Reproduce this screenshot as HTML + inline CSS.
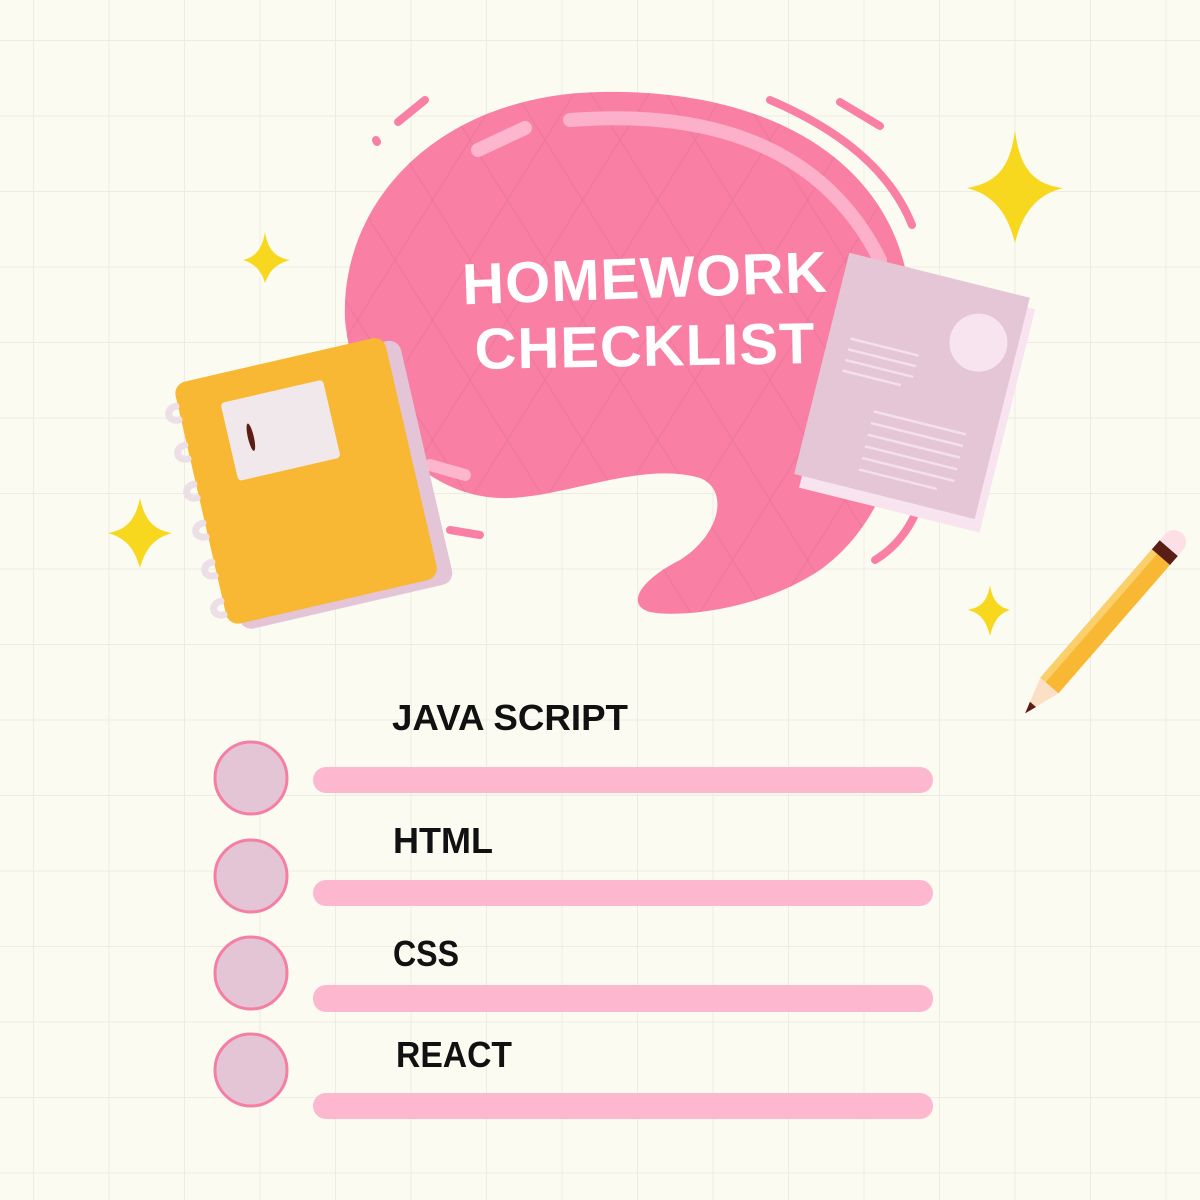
<!DOCTYPE html>
<html><head><meta charset="utf-8"><style>
html,body{margin:0;padding:0}
body{width:1200px;height:1200px;overflow:hidden;background:#fbfbf2;position:relative;font-family:"Liberation Sans",sans-serif}
svg{position:absolute;left:0;top:0}
</style></head><body>
<svg width="1200" height="1200" viewBox="0 0 1200 1200">
<defs>
<pattern id="g" width="75.5" height="75.5" patternUnits="userSpaceOnUse" x="33" y="40">
<path d="M0 0H75.5M0 0V75.5" stroke="#ecece3" stroke-width="2" fill="none"/>
</pattern>
<pattern id="d" width="75" height="120" patternUnits="userSpaceOnUse" x="20" y="20">
<path d="M0 0L75 120M75 0L0 120" stroke="#e9779c" stroke-width="1.2" fill="none"/>
</pattern>
<clipPath id="bc"><path d="M600 92C780 88 900 170 910 300C918 420 890 520 820 570C760 610 680 618 650 612C625 605 640 580 680 560C720 535 730 490 700 478C640 460 560 500 500 498C420 495 355 420 345 320C340 200 440 95 600 92Z"/></clipPath>
</defs>
<rect width="1200" height="1200" fill="url(#g)"/>
<path d="M600 92C780 88 900 170 910 300C918 420 890 520 820 570C760 610 680 618 650 612C625 605 640 580 680 560C720 535 730 490 700 478C640 460 560 500 500 498C420 495 355 420 345 320C340 200 440 95 600 92Z" fill="#f97fa4"/>
<rect x="340" y="85" width="580" height="540" fill="url(#d)" clip-path="url(#bc)" opacity=".8"/>
<path d="M570 120C700 110 820 140 880 260" stroke="#fdb6cd" stroke-width="14" fill="none" stroke-linecap="round" opacity=".9"/>
<path d="M478 150L525 128" stroke="#fdb6cd" stroke-width="14" stroke-linecap="round"/>
<path d="M430 465L465 475" stroke="#fdb6cd" stroke-width="12" stroke-linecap="round"/>
<g stroke="#f97fa4" stroke-width="8" fill="none" stroke-linecap="round">
<path d="M398 122L425 100"/><path d="M376 140L377 142"/>
<path d="M770 100C840 130 890 170 912 225"/><path d="M840 102L880 126"/>
<path d="M450 530L480 535"/><path d="M875 560C900 545 915 520 920 500"/>
</g>
<g fill="#f7d81e">
<path d="M1015 130C1020 175 1040 185 1063 188C1035 195 1022 215 1015 243C1008 215 995 195 967 188C995 183 1010 170 1015 130Z"/>
<path d="M265 232C268 252 278 258 290 260C276 264 270 270 265 283C261 270 255 264 243 260C255 257 262 250 265 232Z"/>
<path d="M140 498C145 522 155 530 172 533C155 538 146 547 140 568C134 547 125 538 108 533C125 530 135 522 140 498Z"/>
<path d="M990 585C993 603 1000 607 1010 610C1000 613 994 620 990 636C986 620 980 613 968 610C980 607 987 603 990 585Z"/>
</g>
<g transform="rotate(-13 310 480)">
<rect x="210" y="362" width="218" height="250" rx="12" fill="#e4c5d7"/>
<rect x="198" y="356" width="216" height="248" rx="12" fill="#f8b833"/>
<rect x="240" y="385" width="105" height="80" rx="4" fill="#f1e8eb"/>
<ellipse cx="262" cy="425" rx="3" ry="14" fill="#5b1e16"/>
<g fill="none" stroke="#ece0e6" stroke-width="7" stroke-linecap="round">
<path d="M196 378c-12 0-12 14 0 14"/><path d="M196 418c-12 0-12 14 0 14"/><path d="M196 458c-12 0-12 14 0 14"/><path d="M196 498c-12 0-12 14 0 14"/><path d="M196 538c-12 0-12 14 0 14"/><path d="M196 578c-12 0-12 14 0 14"/>
</g>
</g>
<g transform="rotate(14 912 390)">
<rect x="826" y="282" width="186" height="230" fill="#f8e4ef"/>
<rect x="818" y="272" width="186" height="228" fill="#e5c6d6"/>
<circle cx="965" cy="328" r="29" fill="#f7e4ee"/>
<g stroke="#f4e0ea" stroke-width="2.5">
<path d="M840 355H910M840 366H910M840 377H910M840 388H900"/>
<path d="M880 420H975M880 432H975M880 444H975M880 456H975M880 468H975M880 480H960"/>
</g>
</g>
<g transform="rotate(-49 1115 610)">
<rect x="1015" y="598" width="170" height="24" fill="#f8b833"/>
<rect x="1015" y="598" width="170" height="7" fill="#fbcf6a"/>
<rect x="1185" y="598" width="12" height="24" fill="#5b1e16"/>
<path d="M1197 598h8a12 12 0 0 1 0 24h-8Z" fill="#fde0e6"/>
<path d="M1015 598L978 610L1015 622Z" fill="#fbe0c6"/>
<path d="M990 606L978 610L990 614Z" fill="#5b1e16"/>
</g>
<g font-family="Liberation Sans, sans-serif" font-weight="bold" fill="#fff" font-size="58" letter-spacing="1">
<text x="645" y="298" text-anchor="middle" transform="rotate(-2 645 280)">HOMEWORK</text>
<text x="645" y="366" text-anchor="middle" transform="rotate(-1 645 350)">CHECKLIST</text>
</g>
<g fill="#fdb8cf">
<rect x="313" y="767" width="620" height="26" rx="13"/>
<rect x="313" y="880" width="620" height="26" rx="13"/>
<rect x="313" y="985" width="620" height="27" rx="13"/>
<rect x="313" y="1093" width="620" height="26" rx="13"/>
</g>
<g fill="#e4c5d6" stroke="#f57fa3" stroke-width="3">
<circle cx="251" cy="778" r="36"/><circle cx="251" cy="876" r="36"/><circle cx="251" cy="973" r="36"/><circle cx="251" cy="1070" r="36"/>
</g>
<g font-family="Liberation Sans, sans-serif" font-weight="bold" fill="#111" font-size="36">
<text x="392" y="730" textLength="236" lengthAdjust="spacingAndGlyphs">JAVA SCRIPT</text>
<text x="393" y="853" textLength="100" lengthAdjust="spacingAndGlyphs">HTML</text>
<text x="393" y="966" textLength="66" lengthAdjust="spacingAndGlyphs">CSS</text>
<text x="396" y="1067" textLength="116" lengthAdjust="spacingAndGlyphs">REACT</text>
</g>
</svg>
</body></html>
